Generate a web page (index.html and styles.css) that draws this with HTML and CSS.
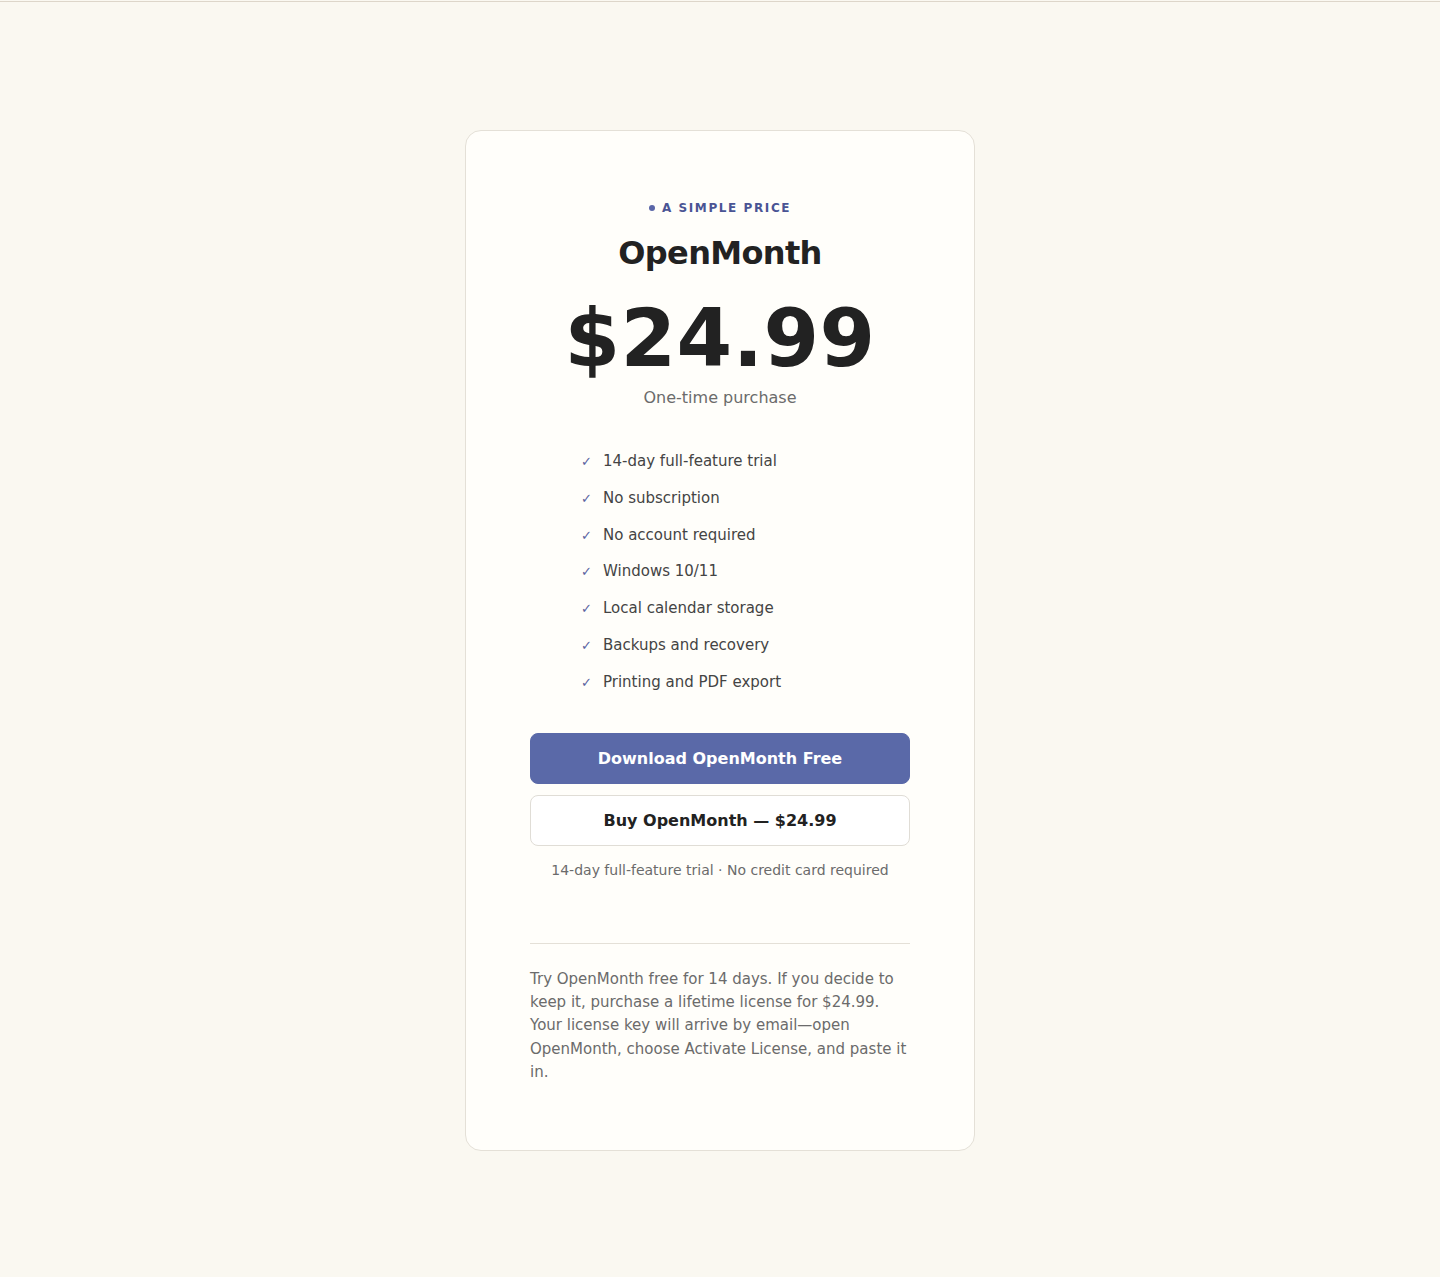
FILE: index.html
```html
<!DOCTYPE html>
<html lang="en">
<head>
    <meta charset="UTF-8">
    <meta name="viewport" content="width=device-width, initial-scale=1.0">
    <title>OpenMonth - Pricing</title>
    <link rel="stylesheet" href="styles.css">
</head>
<body>
    <div class="topbar"></div>
    <main class="page">
        <section class="card">
            <p class="eyebrow"><span class="dot"></span>A SIMPLE PRICE</p>
            <h1 class="title">OpenMonth</h1>
            <div class="price">$24.99</div>
            <p class="price-note">One-time purchase</p>

            <ul class="features">
                <li><span class="check">✓</span>14-day full-feature trial</li>
                <li><span class="check">✓</span>No subscription</li>
                <li><span class="check">✓</span>No account required</li>
                <li><span class="check">✓</span>Windows 10/11</li>
                <li><span class="check">✓</span>Local calendar storage</li>
                <li><span class="check">✓</span>Backups and recovery</li>
                <li><span class="check">✓</span>Printing and PDF export</li>
            </ul>

            <div class="actions">
                <a class="btn btn-primary" href="#">Download OpenMonth Free</a>
                <a class="btn btn-secondary" href="#">Buy OpenMonth — $24.99</a>
                <p class="fine-print">14-day full-feature trial · No credit card required</p>
            </div>

            <hr class="divider">

            <p class="details">Try OpenMonth free for 14 days. If you decide to keep it, purchase a lifetime license for $24.99. Your license key will arrive by email—open OpenMonth, choose Activate License, and paste it in.</p>
        </section>
    </main>
</body>
</html>
```

FILE: styles.css
```css
body {
    font-family: "DejaVu Sans", sans-serif;
    background-color: #faf8f1;
    color: #222222;
    margin: 0;
    padding: 0;
}

.topbar {
    height: 1px;
    border-bottom: 1px solid #ddd6ca;
}

.page {
    padding: 128px 0 127px;
}

.card {
    width: 380px;
    margin: 0 auto;
    padding: 68px 64px 65px;
    background: #fffefa;
    border: 1px solid #e4e0d7;
    border-radius: 16px;
    text-align: center;
}

.eyebrow {
    margin: 0;
    font-size: 12px;
    line-height: 18px;
    font-weight: bold;
    letter-spacing: 1.6px;
    color: #4a5494;
}

.dot {
    display: inline-block;
    width: 6px;
    height: 6px;
    margin-right: 7px;
    border-radius: 50%;
    background: #5a66a8;
    vertical-align: 1px;
}

.title {
    margin: 17px 0 0;
    font-size: 32px;
    line-height: 38px;
    letter-spacing: -0.02em;
    font-weight: bold;
}

.price {
    margin-top: 22px;
    font-size: 80px;
    line-height: 90px;
    font-weight: bold;
    letter-spacing: 0.005em;
}

.price-note {
    margin: 2px 0 0;
    font-size: 16px;
    line-height: 24px;
    color: #6b6b6b;
}

.features {
    list-style: none;
    max-width: 280px;
    margin: 33px auto 0;
    padding: 0;
    text-align: left;
}

.features li {
    padding: 7px 0;
    font-size: 15px;
    line-height: 22.8px;
    color: #444444;
}

.check {
    display: inline-block;
    width: 22px;
    padding-left: 1px;
    font-size: 13px;
    line-height: 1;
    color: #5a62a0;
}

.actions {
    margin-top: 32px;
}

.btn {
    display: block;
    box-sizing: border-box;
    height: 51px;
    line-height: 49px;
    border-radius: 8px;
    font-size: 16px;
    font-weight: bold;
    text-decoration: none;
}

.btn-primary {
    background: #5a69a8;
    color: #ffffff;
    border: 1px solid #5a69a8;
}

.btn-secondary {
    margin-top: 11px;
    background: #ffffff;
    color: #222222;
    border: 1px solid #e0ddd6;
}

.fine-print {
    margin: 14px 0 0;
    font-size: 14px;
    line-height: 20px;
    color: #6b6b6b;
}

.divider {
    margin: 63px 0 0;
    border: none;
    border-top: 1px solid #e4e0d7;
}

.details {
    margin: 24px 0 0;
    text-align: left;
    font-size: 15px;
    line-height: 23.4px;
    color: #6b6b6b;
}
```
